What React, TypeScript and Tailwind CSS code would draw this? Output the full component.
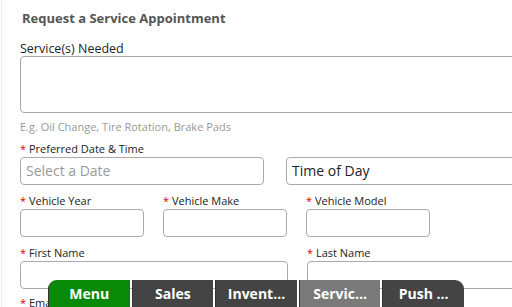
const font = { fontFamily: '"Open Sans", "DejaVu Sans", sans-serif' }

function Req() {
  return <span className="text-[#d00]">* </span>
}

function Field({ label, required, className }: { label: string; required?: boolean; className: string }) {
  return (
    <div className={className}>
      <div className="text-[11px] leading-[14px] text-[#222] h-[14px] whitespace-nowrap">
        {required && <Req />}
        {label}
      </div>
      <div className="mt-[1px] h-[28px] rounded-[4px] border border-[#aaa] bg-white" />
    </div>
  )
}

const tabs = [
  { label: 'Menu', bg: 'bg-[#088a08]', round: 'rounded-tl-[9px]' },
  { label: 'Sales', bg: 'bg-[#444]', round: '' },
  { label: 'Invent...', bg: 'bg-[#444]', round: '' },
  { label: 'Servic...', bg: 'bg-[#7a7a7a]', round: '' },
  { label: 'Push ...', bg: 'bg-[#444]', round: 'rounded-tr-[9px]' },
]

export default function App() {
  return (
    <div className="relative w-[512px] h-[307px] overflow-hidden bg-white" style={font}>
      <div className="ml-[1px] h-full border-l border-[#eee]">
        <div className="pl-[18px] pt-[9px] w-[540px]">
          <h2 className="pl-[2px] text-[13px] leading-[18px] font-bold text-[#555]">Request a Service Appointment</h2>

          <div className="mt-[15px] text-[12.5px] leading-[14px] text-[#222]">Service(s) Needed</div>
          <div className="h-[57px] rounded-[4px] border border-[#aaa]" />
          <div className="mt-[7px] text-[11px] leading-[14px] text-[#999]">E.g. Oil Change, Tire Rotation, Brake Pads</div>

          <div className="mt-[8px] text-[11px] leading-[14px] text-[#222]">
            <Req />
            Preferred Date &amp; Time
          </div>
          <div className="mt-[1px] flex gap-[22px]">
            <div className="w-[244px] h-[28px] rounded-[4px] border border-[#aaa] px-[5px] text-[14px] leading-[26px] text-[#999]">
              Select a Date
            </div>
            <div className="flex-1 h-[28px] rounded-[4px] border border-[#aaa] px-[5px] text-[14px] leading-[26px] text-[#222]">
              Time of Day
            </div>
          </div>

          <div className="mt-[9px] flex gap-[19px]">
            <Field label="Vehicle Year" required className="w-[124px]" />
            <Field label="Vehicle Make" required className="w-[124px]" />
            <Field label="Vehicle Model" required className="w-[124px]" />
          </div>

          <div className="mt-[9px] flex gap-[19px]">
            <Field label="First Name" required className="w-[268px]" />
            <Field label="Last Name" required className="flex-1" />
          </div>

          <div className="mt-[7px] text-[11px] leading-[14px] text-[#222]">
            <Req />
            Email
          </div>
        </div>
      </div>

      <div className="absolute left-[48px] top-[280px] w-[416px] h-[27px] flex gap-[2px]">
        {tabs.map((t) => (
          <div
            key={t.label}
            className={`flex-1 ${t.bg} ${t.round} border-l border-[#333] text-white font-bold text-[14px] leading-[27px] text-center`}
          >
            {t.label}
          </div>
        ))}
      </div>
    </div>
  )
}
